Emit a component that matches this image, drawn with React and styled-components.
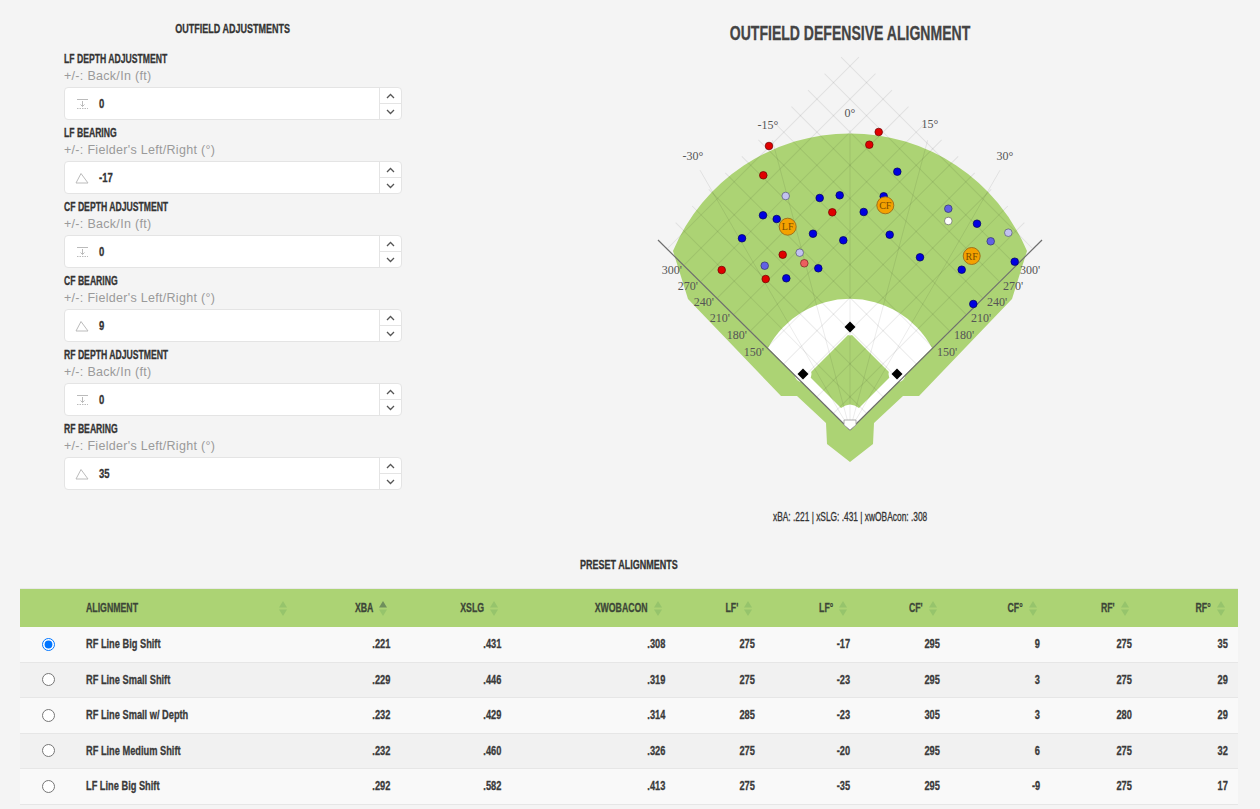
import React from "react";
import styled, { createGlobalStyle } from "styled-components";

const narrowFont = `"Liberation Sans", Arial, sans-serif`;
const fieldGreen = "#acd374";
const lineGray = "#e4e4e4";

const GlobalStyle = createGlobalStyle`
  body {
    margin: 0;
    background: #f4f4f4;
    font-family: "Liberation Sans", Arial, sans-serif;
    color: #333;
  }
`;

// the page's heading face is a tall condensed grotesque; a squeezed Arial stands in for it
const Narrow = styled.span`
  display: inline-block;
  white-space: nowrap;
  -webkit-text-stroke: 0.3px currentColor;
  transform: scaleX(${(p) => p.$scale || 0.72});
  transform-origin: ${(p) => p.$origin || "left"} center;
`;

const Page = styled.div`
  width: 1260px;
`;

const TopGrid = styled.div`
  display: grid;
  grid-template-columns: 338px 820px;
  column-gap: 38px;
  padding-left: 64px;
`;

const AdjustPanel = styled.div`
  padding-top: 21px;
  display: flex;
  flex-direction: column;
`;

const PanelTitle = styled.div`
  font-family: ${narrowFont};
  font-weight: 700;
  font-size: 12.5px;
  line-height: 16px;
  text-align: center;
  color: #333;
  margin-bottom: 14px;
`;

const FieldGroup = styled.div`
  display: flex;
  flex-direction: column;
  height: 74px;
`;

const FieldLabel = styled.div`
  font-family: ${narrowFont};
  font-weight: 700;
  font-size: 12.5px;
  line-height: 16px;
  color: #333;
`;

const FieldHint = styled.div`
  font-size: 12.5px;
  letter-spacing: 0.3px;
  line-height: 16px;
  color: #9a9a9a;
  margin: 1px 0 3px;
`;

const InputBox = styled.div`
  display: flex;
  align-items: center;
  height: 33px;
  box-sizing: border-box;
  background: #fff;
  border: 1px solid ${lineGray};
  border-radius: 4px;
  padding-left: 10px;
`;

const InputIcon = styled.span`
  display: flex;
  width: 14px;
  justify-content: center;
  margin-right: 10px;
`;

const InputValue = styled.span`
  flex: 1;
  font-family: ${narrowFont};
  font-weight: 700;
  font-size: 12.5px;
  color: #333;
`;

const Spinner = styled.div`
  display: flex;
  flex-direction: column;
  width: 21px;
  height: 100%;
  border-left: 1px solid ${lineGray};
`;

const SpinButton = styled.div`
  flex: 1;
  display: flex;
  align-items: center;
  justify-content: center;
  & + & {
    border-top: 1px solid ${lineGray};
  }
`;

const ChartPanel = styled.div`
  display: flex;
  flex-direction: column;
  align-items: center;
  padding-top: 21px;
`;

const ChartTitle = styled.div`
  font-family: ${narrowFont};
  font-weight: 700;
  font-size: 19.5px;
  line-height: 24px;
  color: #444;
  margin-bottom: 10px;
`;

const FieldSvg = styled.svg`
  display: block;
  width: 420px;
  height: 420px;
`;

const StatLine = styled.div`
  font-family: ${narrowFont};
  font-size: 12.5px;
  line-height: 16px;
  color: #333;
  margin-top: 34px;
`;

const PresetSection = styled.div`
  margin-top: 32px;
  padding: 0 22px 0 20px;
`;

const SectionTitle = styled.div`
  font-family: ${narrowFont};
  font-weight: 700;
  font-size: 12.5px;
  line-height: 16px;
  text-align: center;
  color: #333;
  margin-bottom: 15px;
`;

const columns = "56px 219px 105px 111px 164px 90px 95px 90px 100px 92px 96px";

const HeaderRow = styled.div`
  display: grid;
  grid-template-columns: ${columns};
  height: 38px;
  background: ${fieldGreen};
  border-top: 1px solid #e8e8e8;
`;

const HeadCell = styled.div`
  display: flex;
  align-items: center;
  justify-content: ${(p) => (p.$left ? "space-between" : "flex-end")};
  gap: 6px;
  padding: 0 ${(p) => (p.$left ? "8px" : "13px")} 0 10px;
  font-family: ${narrowFont};
  font-weight: 700;
  font-size: 12.5px;
  color: #3d4638;
`;

const Row = styled.div`
  display: grid;
  grid-template-columns: ${columns};
  height: 35.5px;
  box-sizing: border-box;
  align-items: center;
  background: ${(p) => (p.$even ? "#f1f1f1" : "#f9f9f9")};
  border-bottom: 1px solid #e6e6e6;
`;

const Cell = styled.div`
  padding: 0 10px;
  text-align: ${(p) => (p.$left ? "left" : "right")};
  font-family: ${narrowFont};
  font-weight: 700;
  font-size: 12.5px;
  color: #3a3a3a;
  white-space: nowrap;
`;

const RadioCell = styled.div`
  display: flex;
  justify-content: center;
`;

const Radio = styled.input`
  margin: 0;
  width: 13px;
  height: 13px;
`;

const DepthIcon = () => (
  <svg width="13" height="12" viewBox="0 0 13 12" fill="none" stroke="#bbb" strokeWidth="1">
    <line x1="1" y1="1.5" x2="12" y2="1.5" />
    <line x1="6.5" y1="3" x2="6.5" y2="8.5" />
    <polyline points="4.5,6.5 6.5,8.5 8.5,6.5" />
    <line x1="1" y1="10.5" x2="12" y2="10.5" strokeDasharray="1.5 1" />
  </svg>
);

const BearingIcon = () => (
  <svg width="14" height="12" viewBox="0 0 14 12" fill="none" stroke="#bbb" strokeWidth="1" strokeLinejoin="round">
    <path d="M1 11 L6 1.5 L13 11 Z" />
  </svg>
);

const Chevron = ({ up }) => (
  <svg width="9" height="6" viewBox="0 0 9 6" fill="none" stroke="#555" strokeWidth="1.3">
    <polyline points={up ? "1,5 4.5,1.5 8,5" : "1,1 4.5,4.5 8,1"} />
  </svg>
);

const SortIcon = ({ active }) => (
  <svg width="8" height="17" viewBox="0 0 8 17">
    <path d="M0 7.5 L4 1 L8 7.5 Z" fill={active ? "#6f8f5c" : "#96c46c"} />
    <path d="M0 9.5 L4 16 L8 9.5 Z" fill="#96c46c" />
  </svg>
);

const adjustments = [
  { label: "LF DEPTH ADJUSTMENT", hint: "+/-: Back/In (ft)", kind: "depth", value: "0" },
  { label: "LF BEARING", hint: "+/-: Fielder's Left/Right (°)", kind: "bearing", value: "-17" },
  { label: "CF DEPTH ADJUSTMENT", hint: "+/-: Back/In (ft)", kind: "depth", value: "0" },
  { label: "CF BEARING", hint: "+/-: Fielder's Left/Right (°)", kind: "bearing", value: "9" },
  { label: "RF DEPTH ADJUSTMENT", hint: "+/-: Back/In (ft)", kind: "depth", value: "0" },
  { label: "RF BEARING", hint: "+/-: Fielder's Left/Right (°)", kind: "bearing", value: "35" },
];

const dotColors = {
  red: ["#e00000", "#6a0000"],
  pink: ["#ec5f5f", "#7a2020"],
  blue: ["#0000e0", "#00005a"],
  mid: ["#6262e4", "#30306a"],
  lav: ["#c2c2f0", "#55557a"],
  white: ["#ffffff", "#666666"],
};

const balls = [
  ["red", 878.7, 132], ["red", 869.3, 144.7], ["red", 769, 146], ["red", 763.3, 175.3],
  ["red", 832.3, 212.3], ["red", 782.7, 254.7], ["red", 721.7, 270], ["red", 765.7, 279],
  ["pink", 804.3, 263.3],
  ["blue", 897.3, 171.7], ["blue", 819.7, 198], ["blue", 839.7, 195.3], ["blue", 883.7, 196.3],
  ["blue", 863.7, 212], ["blue", 763, 215.3], ["blue", 776.7, 219], ["blue", 813, 233.7],
  ["blue", 843.3, 240.3], ["blue", 889.7, 234.7], ["blue", 742, 238.3], ["blue", 818.3, 268.3],
  ["blue", 786.3, 278.3], ["blue", 920, 257.3], ["blue", 977, 223.7], ["blue", 961.7, 269.7],
  ["blue", 1014.7, 261.7], ["blue", 973.3, 304],
  ["mid", 948.3, 208.7], ["mid", 990.7, 241.3], ["mid", 764.7, 265.7],
  ["lav", 785.7, 196], ["lav", 799.7, 252.7], ["lav", 1008.3, 232.7],
  ["white", 948.3, 221],
];

const fielders = [
  ["LF", 787.7, 226.7],
  ["CF", 885.3, 205.3],
  ["RF", 971.7, 256],
];

const angleLabels = [
  ["-30°", 693, 160], ["-15°", 768, 129], ["0°", 850, 117], ["15°", 930, 128], ["30°", 1005, 160],
];

const distLabels = [
  ["150'", 352, 764, 937], ["180'", 335, 747, 954], ["210'", 318, 730, 971],
  ["240'", 302, 714, 987], ["270'", 286, 698, 1003], ["300'", 270, 682, 1020],
];

const bases = [[850, 327], [897, 374], [803, 374]];

const GRID = 23.4;
const GRID_LEN = 270;

const FieldChart = () => {
  const lattice = [];
  for (let k = 1; k <= 11; k++) {
    lattice.push(<line key={`a${k}`} x1={k * GRID} y1={0} x2={k * GRID} y2={-GRID_LEN} />);
    lattice.push(<line key={`b${k}`} x1={0} y1={-k * GRID} x2={GRID_LEN} y2={-k * GRID} />);
  }
  const radials = [-30, -15, 0, 15, 30].map((deg) => {
    const r = (deg * Math.PI) / 180;
    return (
      <line key={deg} x1={850} y1={430} x2={850 + 300 * Math.sin(r)} y2={430 - 300 * Math.cos(r)} />
    );
  });

  return (
    <FieldSvg viewBox="640 55 420 420">
      <path
        d="M850,462 L827,444 L826,423 L797,396 L781,396 L688,299 L673,251 A192,192 0 0 1 1027,251 L1012,299 L919,396 L903,396 L874,423 L873,444 Z"
        fill={fieldGreen}
      />
      <path d="M850,430 L768,348 A93,93 0 0 1 932,348 Z" fill="#fff" />
      <path d="M850,333 L808,375 L841,408 Q850,401 859,408 L892,375 Z" fill={fieldGreen} />
      {bases.map(([x, y]) => (
        <circle key={`h${x}`} cx={x} cy={y} r="8.5" fill="#fff" />
      ))}

      <g stroke="#000" strokeOpacity="0.08" strokeWidth="1">
        <g transform="translate(850,430) rotate(-45)">{lattice}</g>
        {radials}
      </g>

      <g stroke="#6e6e6e" strokeWidth="1.2">
        <line x1="850" y1="430" x2="658" y2="240" />
        <line x1="850" y1="430" x2="1042" y2="240" />
      </g>

      {bases.map(([x, y]) => (
        <polygon key={`b${x}`} points={`${x},${y - 5.5} ${x + 5.5},${y} ${x},${y + 5.5} ${x - 5.5},${y}`} fill="#000" />
      ))}
      <polygon points="844,420 856,420 856,425 850,430 844,425" fill="#fff" stroke="#999" strokeWidth="0.8" />

      {balls.map(([c, x, y], i) => (
        <circle key={i} cx={x} cy={y} r="3.8" fill={dotColors[c][0]} stroke={dotColors[c][1]} strokeWidth="0.7" />
      ))}

      <g fontFamily='"Liberation Serif", "DejaVu Serif", serif' fontSize="12" fill="#555">
        {angleLabels.map(([t, x, y]) => (
          <text key={t} x={x} y={y} textAnchor="middle">{t}</text>
        ))}
        {distLabels.map(([t, y, lx, rx]) => (
          <React.Fragment key={t}>
            <text x={lx} y={y + 4} textAnchor="end">{t}</text>
            <text x={rx} y={y + 4}>{t}</text>
          </React.Fragment>
        ))}
      </g>

      {fielders.map(([t, x, y]) => (
        <g key={t}>
          <circle cx={x} cy={y} r="8.5" fill="#f4a100" stroke="#9a6a18" strokeWidth="0.9" />
          <text
            x={x}
            y={y + 3.5}
            textAnchor="middle"
            fontFamily='"Liberation Serif", "DejaVu Serif", serif'
            fontSize="10"
            fill="#7a4c00"
          >
            {t}
          </text>
        </g>
      ))}
    </FieldSvg>
  );
};

const headers = ["XBA", "XSLG", "XWOBACON", "LF'", "LF°", "CF'", "CF°", "RF'", "RF°"];

const presets = [
  ["RF Line Big Shift", ".221", ".431", ".308", "275", "-17", "295", "9", "275", "35"],
  ["RF Line Small Shift", ".229", ".446", ".319", "275", "-23", "295", "3", "275", "29"],
  ["RF Line Small w/ Depth", ".232", ".429", ".314", "285", "-23", "305", "3", "280", "29"],
  ["RF Line Medium Shift", ".232", ".460", ".326", "275", "-20", "295", "6", "275", "32"],
  ["LF Line Big Shift", ".292", ".582", ".413", "275", "-35", "295", "-9", "275", "17"],
];

const App = () => (
  <Page>
    <GlobalStyle />
    <TopGrid>
      <AdjustPanel>
        <PanelTitle>
          <Narrow $origin="center">OUTFIELD ADJUSTMENTS</Narrow>
        </PanelTitle>
        {adjustments.map((a) => (
          <FieldGroup key={a.label}>
            <FieldLabel>
              <Narrow $scale={0.69}>{a.label}</Narrow>
            </FieldLabel>
            <FieldHint>{a.hint}</FieldHint>
            <InputBox>
              <InputIcon>{a.kind === "depth" ? <DepthIcon /> : <BearingIcon />}</InputIcon>
              <InputValue>
                <Narrow $scale={0.76}>{a.value}</Narrow>
              </InputValue>
              <Spinner>
                <SpinButton>
                  <Chevron up />
                </SpinButton>
                <SpinButton>
                  <Chevron />
                </SpinButton>
              </Spinner>
            </InputBox>
          </FieldGroup>
        ))}
      </AdjustPanel>

      <ChartPanel>
        <ChartTitle>
          <Narrow $origin="center">OUTFIELD DEFENSIVE ALIGNMENT</Narrow>
        </ChartTitle>
        <FieldChart />
        <StatLine>
          <Narrow $origin="center" $scale={0.67}>
            xBA: .221 | xSLG: .431 | xwOBAcon: .308
          </Narrow>
        </StatLine>
      </ChartPanel>
    </TopGrid>

    <PresetSection>
      <SectionTitle>
        <Narrow $origin="center">PRESET ALIGNMENTS</Narrow>
      </SectionTitle>
      <HeaderRow>
        <HeadCell />
        <HeadCell $left>
          <Narrow $scale={0.7}>ALIGNMENT</Narrow>
          <SortIcon />
        </HeadCell>
        {headers.map((h) => (
          <HeadCell key={h}>
            <Narrow $origin="right" $scale={0.7}>
              {h}
            </Narrow>
            <SortIcon active={h === "XBA"} />
          </HeadCell>
        ))}
      </HeaderRow>
      {presets.map((row, i) => (
        <Row key={row[0]} $even={i % 2 === 1}>
          <RadioCell>
            <Radio type="radio" name="preset" defaultChecked={i === 0} />
          </RadioCell>
          {row.map((v, j) => (
            <Cell key={j} $left={j === 0}>
              <Narrow $origin={j === 0 ? "left" : "right"} $scale={0.74}>
                {v}
              </Narrow>
            </Cell>
          ))}
        </Row>
      ))}
    </PresetSection>
  </Page>
);

export default App;
